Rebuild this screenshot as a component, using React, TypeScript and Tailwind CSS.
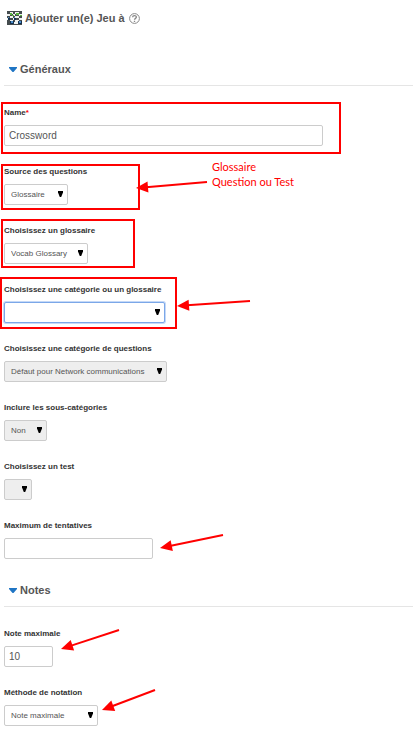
import React from 'react';
import { clsx } from 'clsx';

interface ArrowProps {
  from: [number, number];
  to: [number, number];
}

// Red pointer, coordinates are relative to the field it belongs to
const Arrow: React.FC<ArrowProps> = ({ from, to }) => {
  const angle = (Math.atan2(to[1] - from[1], to[0] - from[0]) * 180) / Math.PI;
  const length = Math.hypot(to[0] - from[0], to[1] - from[1]);

  return (
    <svg className="pointer-events-none absolute top-0 left-0 h-full w-full overflow-visible" aria-hidden="true">
      <g transform={`translate(${to[0]} ${to[1]}) rotate(${angle})`} fill="#ff0000">
        <path d={`M${-length} -1 H-10 V1 H${-length} Z`} />
        <path d="M0 0 L-12 -5.5 V5.5 Z" />
      </g>
    </svg>
  );
};

interface FieldProps {
  id: string;
  label: string;
  required?: boolean;
  frame?: string;
  arrow?: ArrowProps;
  children: React.ReactNode;
}

const Field: React.FC<FieldProps> = ({ id, label, required, frame, arrow, children }) => (
  <div className="relative flex flex-col items-start gap-[5px]">
    <label htmlFor={id} className="text-[8px] leading-[14px] font-bold text-[#333333]">
      {label}
      {required && <span className="text-[#ff0000]">*</span>}
    </label>
    {children}
    {frame && <div className={clsx('pointer-events-none absolute border-2 border-[#ff0000]', frame)} />}
    {arrow && <Arrow {...arrow} />}
  </div>
);

interface SelectProps {
  id: string;
  value: string;
  width: string;
  disabled?: boolean;
  active?: boolean;
}

const Select: React.FC<SelectProps> = ({ id, value, width, disabled, active }) => (
  <div className={clsx('relative', width)}>
    <select
      id={id}
      disabled={disabled}
      defaultValue={value}
      className={clsx(
        'block h-[21px] w-full appearance-none rounded-[2px] border pl-[6px] text-[8px] text-[#555555] opacity-100 outline-none',
        active ? 'border-[#7ba7e8] ring-1 ring-[#c5d9f7]' : 'border-[#cccccc]',
        disabled ? 'bg-[#eeeeee]' : 'bg-white'
      )}
    >
      <option value={value}>{value}</option>
    </select>
    <svg
      className="pointer-events-none absolute top-[7px] right-[5px] h-[6px] w-[5px]"
      viewBox="0 0 5 6"
      fill="#000000"
      aria-hidden="true"
    >
      <path d="M0 0 H5 V1.5 L3.2 6 H1.8 L0 1.5 Z" />
    </svg>
  </div>
);

const Section: React.FC<{ title: string; children: React.ReactNode }> = ({ title, children }) => (
  <section>
    <h2 className="mb-5 flex items-center gap-[3px] border-b border-[#e5e5e5] pb-[6px] pl-[5px] text-[11px] leading-5 font-bold text-[#555555]">
      <svg className="h-[5px] w-[8px]" viewBox="0 0 8 5" fill="#1f75c4" aria-hidden="true">
        <path d="M0 0 H8 V1 L4.5 5 H3.5 L0 1 Z" />
      </svg>
      {title}
    </h2>
    <div className="flex flex-col gap-[19px]">{children}</div>
  </section>
);

const GameIcon = () => (
  <svg className="h-[14px] w-[15px]" viewBox="0 0 15 14" aria-hidden="true">
    <rect width="15" height="14" fill="#eef1f0" />
    <path
      d="M0 0h15v1H0z M0 1h3v2H0z M6 1h2v2H6z M12 1h3v2h-3z M3 3h3v2H3z M8 3h4v2H8z M0 5h3v2H0z M6 5h2v2H6z M12 5h3v2h-3z M3 7h3v2H3z M9 7h3v2H9z M0 9h3v4H0z M6 9h2v2H6z M12 9h3v2h-3z M0 13h15v1H0z"
      fill="#454b4e"
    />
    <path d="M3 2h2v2H3z M9 2h3v2H9z M5 4h2v1H5z M13 4h2v1h-2z" fill="#57b63c" />
    <path d="M3 10h4v3H3z M11 10h4v3h-4z M1 7h2v2H1z M7 7h2v2H7z" fill="#14304d" />
    <path d="M4 10h2v2H4z M12 10h2v2h-2z M7 6h1v1H7z M1 6h1v1H1z" fill="#4a8dcc" />
  </svg>
);

const HelpIcon = () => (
  <svg className="h-[11px] w-[11px]" viewBox="0 0 11 11" fill="none" stroke="#888888" aria-hidden="true">
    <circle cx="5.5" cy="5.5" r="4.9" strokeWidth="1" />
    <path d="M3.6 4.3 C3.6 2.2 7.4 2.2 7.4 4.1 C7.4 5.4 5.5 5.3 5.5 6.8 M5.5 7.7 V8.9" strokeWidth="1.3" />
  </svg>
);

const inputClass = 'h-[21px] rounded-[2px] border border-[#cccccc] bg-white px-1 text-[10px] text-[#555555] outline-none';

const App: React.FC = () => {
  return (
    <main className="min-h-screen overflow-hidden bg-white pt-2 pb-3 pl-1 font-['Liberation_Sans',Arial,sans-serif]">
      <header className="flex items-center pl-[3px] text-[#555555]">
        <GameIcon />
        <h1 className="ml-[3px] text-[11px] leading-5 font-bold">Ajouter un(e) Jeu à</h1>
        <button type="button" aria-label="Aide" className="ml-1">
          <HelpIcon />
        </button>
      </header>

      <form className="mt-[31px] flex flex-col gap-[21px]">
        <Section title="Généraux">
          <Field id="name" label="Name" required frame="-top-1 -left-[3px] h-[52px] w-[340px]">
            <input id="name" type="text" defaultValue="Crossword" className={clsx(inputClass, 'w-full max-w-[319px]')} />
          </Field>

          <Field
            id="source"
            label="Source des questions"
            frame="-top-px -left-[3px] h-[46px] w-[139px]"
            arrow={{ from: [203, 17], to: [132, 23] }}
          >
            <Select id="source" value="Glossaire" width="w-16" />
            {/* Note next to the arrow */}
            <p className="absolute -top-[6px] left-[208px] font-[Lato,'Liberation_Sans',sans-serif] text-[11px] leading-[15px] text-[#ff0000]">
              Glossaire
              <br />
              Question ou Test
            </p>
          </Field>

          <Field id="glossary" label="Choisissez un glossaire" frame="-top-[5px] -left-[3px] h-[49px] w-[134px]">
            <Select id="glossary" value="Vocab Glossary" width="w-[84px]" />
          </Field>

          <Field
            id="category"
            label="Choisissez une catégorie ou un glossaire"
            frame="-top-[6px] -left-1 h-[52px] w-[177px]"
            arrow={{ from: [246, 18], to: [173, 23] }}
          >
            <Select id="category" value="" width="w-[161px]" active />
          </Field>

          <Field id="question-category" label="Choisissez une catégorie de questions">
            <Select id="question-category" value="Défaut pour Network communications" width="w-[163px]" disabled />
          </Field>

          <Field id="subcategories" label="Inclure les sous-catégories">
            <Select id="subcategories" value="Non" width="w-[43px]" disabled />
          </Field>

          <Field id="quiz" label="Choisissez un test">
            <Select id="quiz" value="" width="w-7" disabled />
          </Field>

          <Field id="attempts" label="Maximum de tentatives" arrow={{ from: [219, 16], to: [156, 29] }}>
            <input id="attempts" type="text" className={clsx(inputClass, 'w-[149px]')} />
          </Field>
        </Section>

        <Section title="Notes">
          <Field id="grade" label="Note maximale" arrow={{ from: [115, 3], to: [57, 22] }}>
            <input id="grade" type="text" defaultValue="10" className={clsx(inputClass, 'w-[49px]')} />
          </Field>

          <Field id="method" label="Méthode de notation" arrow={{ from: [151, 4], to: [98, 24] }}>
            <Select id="method" value="Note maximale" width="w-[94px]" />
          </Field>
        </Section>
      </form>
    </main>
  );
};

export default App;
